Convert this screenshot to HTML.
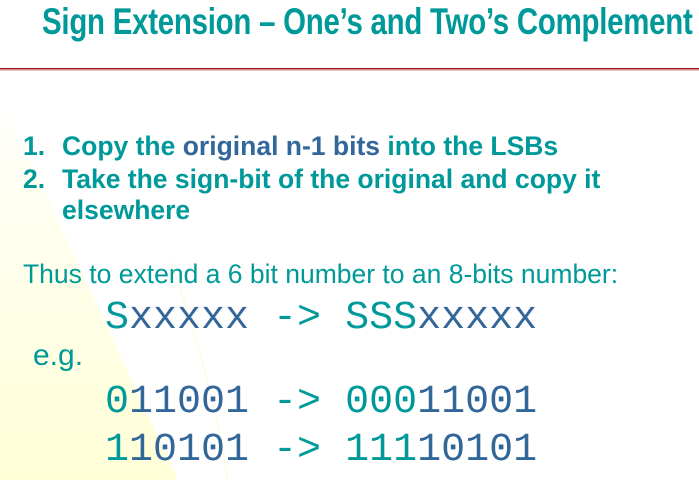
<!DOCTYPE html>
<html><head><meta charset="utf-8"><style>
html,body{margin:0;padding:0;}
body{width:699px;height:480px;overflow:hidden;position:relative;background:#fff;font-family:"Liberation Sans",sans-serif;}
.t{position:absolute;white-space:nowrap;}
.teal{color:#009999}.blue{color:#336699}
.title{left:42px;top:1px;font-weight:bold;font-size:37px;color:#009999;transform:scaleX(0.795);transform-origin:0 0;letter-spacing:-0.3px;}
.b{font-weight:bold;font-size:26.5px;color:#009999;}
.m{font-family:"Liberation Mono",monospace;font-size:40px;}
</style></head><body>
<svg width="699" height="480" style="position:absolute;left:0;top:0">
<defs><linearGradient id="g" x1="0" y1="0" x2="0" y2="1"><stop offset="0" stop-color="#ffffff"/><stop offset="0.3" stop-color="#fffff0"/><stop offset="1" stop-color="#ffffd8"/></linearGradient></defs>
<polygon points="0,95 0,480 178,480" fill="url(#g)"/>
<path d="M170,260 Q210,370 228,480" stroke="#fafad8" fill="none" stroke-width="1"/>
<rect x="0" y="68" width="699" height="1.5" fill="#a01818"/>
<rect x="0" y="70" width="699" height="1" fill="#e8c0c0"/>
</svg>
<div class="t title">Sign Extension – One’s and Two’s Complement</div>
<div class="t b" style="left:23px;top:131px">1.<span style="position:absolute;left:39px">Copy the <span class="blue">original n-1 bits</span> into the LSBs</span></div>
<div class="t b" style="left:23px;top:164px">2.<span style="position:absolute;left:39px">Take the sign-bit of the original and copy it</span></div>
<div class="t b" style="left:62px;top:195px">elsewhere</div>
<div class="t teal" style="left:23px;top:259px;font-size:26.5px">Thus to extend a 6 bit number to an 8-bits number:</div>
<div class="t m" style="left:105px;top:296px"><span class="teal">S</span><span class="blue">xxxxx</span><span class="teal"> -&gt; SSS</span><span class="blue">xxxxx</span></div>
<div class="t teal" style="left:33px;top:339px;font-size:30px">e.g.</div>
<div class="t m" style="left:105px;top:380px"><span class="teal">0</span><span class="blue">11001</span><span class="teal"> -&gt; 000</span><span class="blue">11001</span></div>
<div class="t m" style="left:105px;top:428px"><span class="teal">1</span><span class="blue">10101</span><span class="teal"> -&gt; 111</span><span class="blue">10101</span></div>
</body></html>
